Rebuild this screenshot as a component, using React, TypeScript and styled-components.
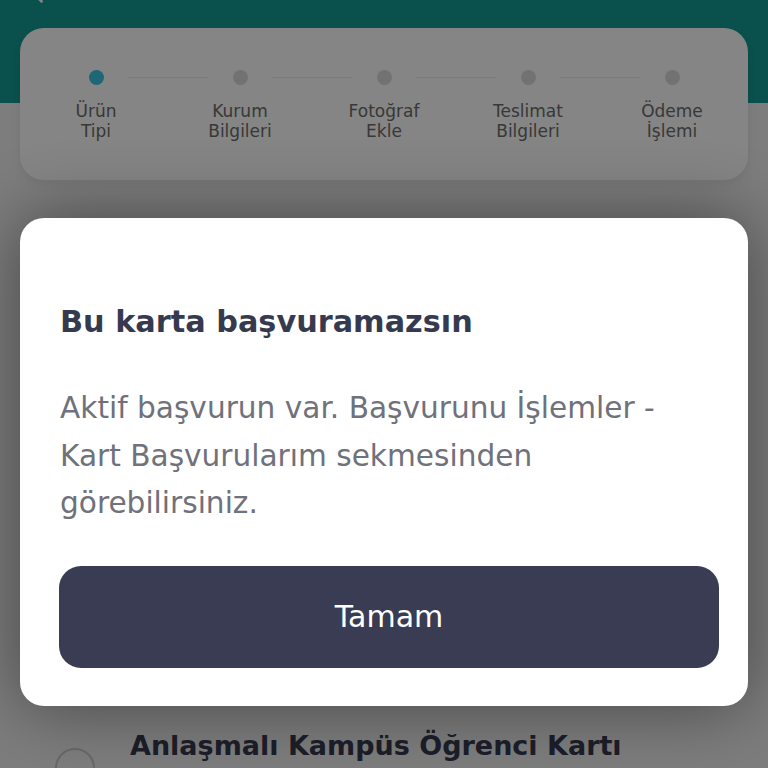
import React from "react";
import styled, { createGlobalStyle } from "styled-components";

const GlobalStyle = createGlobalStyle`
  * { box-sizing: border-box; }
  html, body { margin: 0; padding: 0; }
  body {
    width: 768px;
    height: 768px;
    overflow: hidden;
    background: #efefef;
    font-family: "DejaVu Sans", "Noto Sans", sans-serif;
  }
`;

const steps = [
  { top: "Ürün", bottom: "Tipi" },
  { top: "Kurum", bottom: "Bilgileri" },
  { top: "Fotoğraf", bottom: "Ekle" },
  { top: "Teslimat", bottom: "Bilgileri" },
  { top: "Ödeme", bottom: "İşlemi" },
];

const Page = styled.div`
  position: relative;
  width: 768px;
  height: 768px;
  overflow: hidden;
  background: #efefef;
`;

const Header = styled.div`
  display: flow-root;
  height: 103px;
  background: #159a92;
  padding-left: 24px;
`;

const BackIcon = styled.svg`
  display: block;
  margin-top: -22px;
`;

const StepCard = styled.div`
  margin: -75px 20px 0;
  height: 152px;
  background: #ffffff;
  border-radius: 24px;
  box-shadow: 0 4px 12px rgba(0, 0, 0, 0.06);
  display: grid;
  grid-template-columns: repeat(5, 1fr);
  padding: 42px 4px 0;
`;

const Step = styled.div`
  position: relative;
  display: flex;
  flex-direction: column;
  align-items: center;
`;

const Dot = styled.div<{ $active?: boolean }>`
  width: 15px;
  height: 15px;
  border-radius: 50%;
  background: ${(p) => (p.$active ? "#3dc3e2" : "#dadada")};
`;

const Connector = styled.div`
  position: absolute;
  top: 7px;
  left: calc(50% + 32px);
  width: 80px;
  height: 1px;
  background: #eeeeee;
`;

const StepLabel = styled.div`
  margin-top: 17px;
  font-size: 17px;
  line-height: 19.5px;
  color: #6c6c6c;
  text-align: center;
`;

const ListItem = styled.div`
  display: flex;
  align-items: flex-start;
  gap: 35px;
  padding: 548px 0 0 55px;
`;

const Radio = styled.div`
  width: 40px;
  height: 40px;
  border-radius: 50%;
  border: 2px solid #c9c9c9;
  margin-top: 20px;
  flex-shrink: 0;
`;

const ItemTitle = styled.div`
  font-size: 27px;
  font-weight: 700;
  color: #363a4f;
  line-height: 36px;
  white-space: nowrap;
`;

const Overlay = styled.div`
  position: absolute;
  inset: 0;
  background: rgba(0, 0, 0, 0.48);
  padding: 218px 20px 0;
`;

const Modal = styled.div`
  background: #ffffff;
  border-radius: 24px;
  height: 488px;
  padding: 85px 29px 0 40px;
  box-shadow: 0 0 70px rgba(0, 0, 0, 0.45);
`;

const Title = styled.h2`
  margin: 0;
  font-size: 30.3px;
  line-height: 38px;
  font-weight: 700;
  color: #363a4f;
`;

const Body = styled.p`
  margin: 44px 0 0;
  font-size: 29.6px;
  line-height: 47.5px;
  color: #6f717b;
`;

const Button = styled.button`
  display: block;
  width: calc(100% + 1px);
  height: 102px;
  margin-top: 38px;
  margin-left: -1px;
  border: none;
  border-radius: 22px;
  background: #393c52;
  color: #ffffff;
  font-family: "DejaVu Sans", "Noto Sans", sans-serif;
  font-size: 30px;
  cursor: pointer;
`;

export default function App() {
  return (
    <>
      <GlobalStyle />
      <Page>
        <Header>
          <BackIcon width="28" height="28" viewBox="0 0 24 24" fill="none" stroke="#ffffff" strokeWidth="2.4" strokeLinecap="round">
            <path d="M15 4 L8 12 L15 20" />
          </BackIcon>
        </Header>
        <StepCard>
          {steps.map((s, i) => (
            <Step key={s.top}>
              <Dot $active={i === 0} />
              {i < steps.length - 1 && <Connector />}
              <StepLabel>
                {s.top}
                <br />
                {s.bottom}
              </StepLabel>
            </Step>
          ))}
        </StepCard>
        <ListItem>
          <Radio />
          <ItemTitle>Anlaşmalı Kampüs Öğrenci Kartı</ItemTitle>
        </ListItem>
        <Overlay>
          <Modal>
            <Title>Bu karta başvuramazsın</Title>
            <Body>
              Aktif başvurun var. Başvurunu İşlemler - Kart Başvurularım sekmesinden görebilirsiniz.
            </Body>
            <Button>Tamam</Button>
          </Modal>
        </Overlay>
      </Page>
    </>
  );
}
